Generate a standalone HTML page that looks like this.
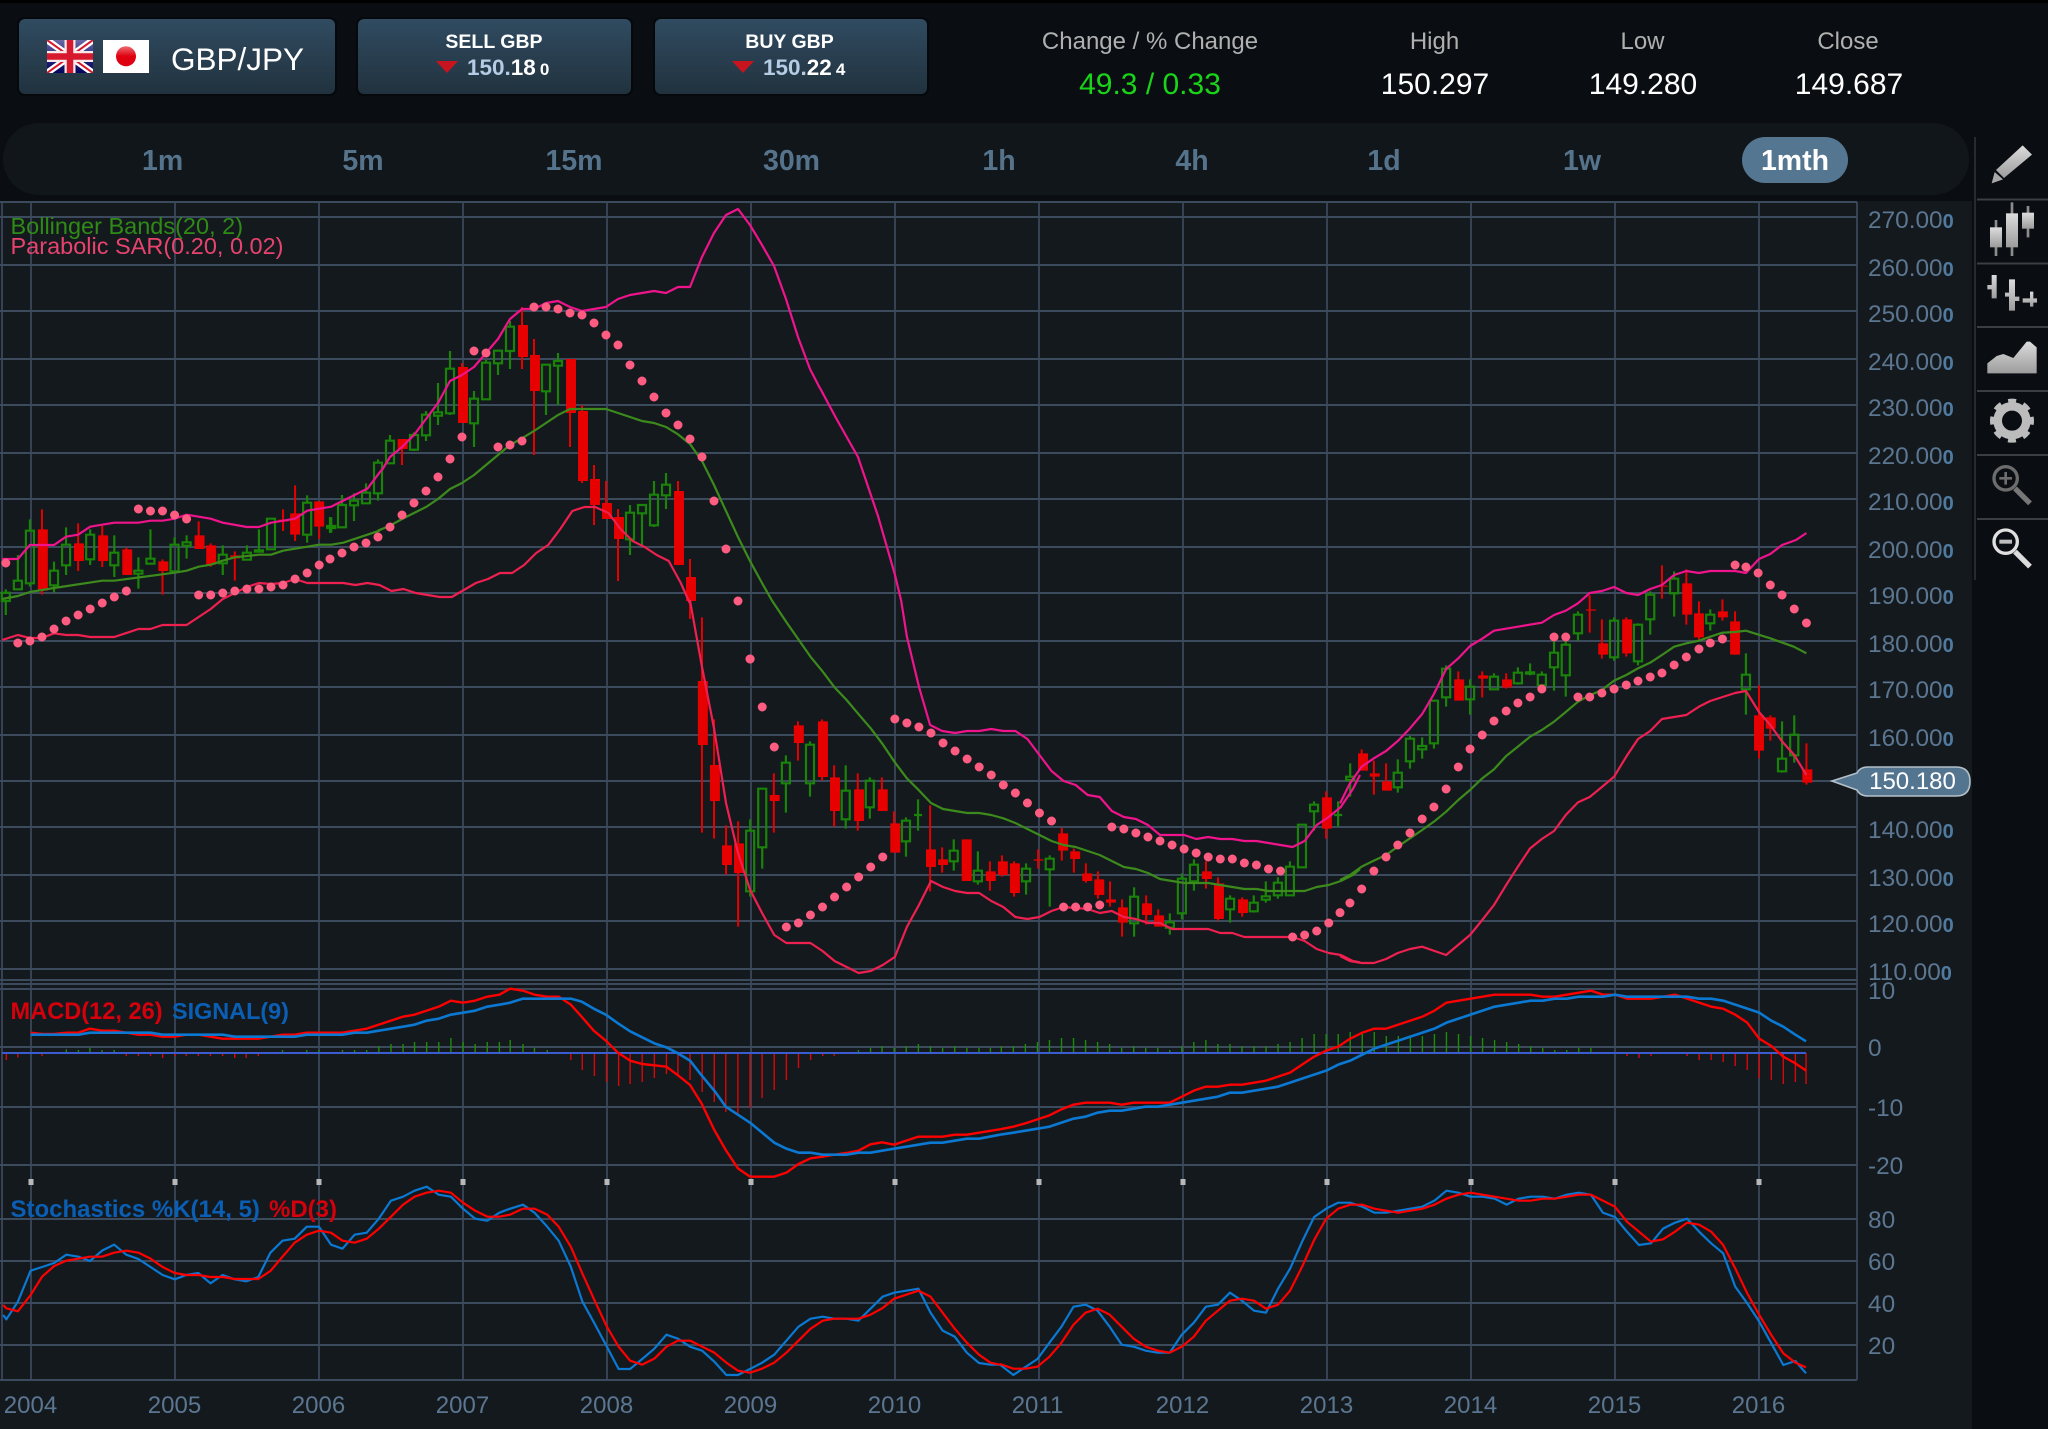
<!DOCTYPE html>
<html lang="en"><head><meta charset="utf-8"><title>GBP/JPY</title>
<style>
html,body{margin:0;padding:0;background:#0a0e12;width:2048px;height:1429px;overflow:hidden}
svg{display:block;font-family:"Liberation Sans",sans-serif}
.n path{vector-effect:non-scaling-stroke;fill:none}
.wr path{stroke:#e60000;stroke-width:2}
.br path{stroke:#e60000;stroke-width:10}
.g path{stroke:#198408;stroke-width:2.2}
.up path{stroke:#f0148c;stroke-width:2.2;stroke-linejoin:round}
.mid path{stroke:#3c8a1c;stroke-width:2.2;stroke-linejoin:round}
.lo path{stroke:#ee2050;stroke-width:2.2;stroke-linejoin:round}
.dot path{stroke:#ff5c82;stroke-width:9;stroke-linecap:round}
.tf{font-size:28.5px;font-weight:700;fill:#56738c;text-anchor:middle}
.hd{font-size:24px;fill:#b0b0b0;text-anchor:middle}
.val{font-size:30px;fill:#fff;text-anchor:middle}
.ax{font-size:24.4px;fill:#5b7690}
.ax tspan{font-size:20px;font-weight:700;fill:#4f7ba0}
.xl{font-size:24px;fill:#5b7690;text-anchor:middle}
.px{font-size:22.5px;font-weight:700;fill:#b4cde4}
</style></head><body>
<svg width="2048" height="1429" viewBox="0 0 2048 1429" xmlns="http://www.w3.org/2000/svg">
<defs>
<linearGradient id="btn" x1="0" y1="0" x2="0" y2="1"><stop offset="0" stop-color="#304b61"/><stop offset="1" stop-color="#21323e"/></linearGradient>
<linearGradient id="ic" x1="0" y1="0" x2="0" y2="1"><stop offset="0" stop-color="#dcdcdc"/><stop offset="1" stop-color="#9c9c9c"/></linearGradient>
<linearGradient id="uk" x1="0" y1="0" x2="0" y2="1"><stop offset="0" stop-color="#6a6aa6"/><stop offset=".5" stop-color="#2a2a80"/><stop offset="1" stop-color="#05055f"/></linearGradient>
<linearGradient id="jp" x1="0" y1="0" x2="0" y2="1"><stop offset="0" stop-color="#ee6a72"/><stop offset=".5" stop-color="#e0000f"/><stop offset="1" stop-color="#dd0010"/></linearGradient>
</defs>
<rect width="2048" height="1429" fill="#0a0e12"/>
<rect width="2048" height="3" fill="#000"/>

<!-- top buttons -->
<rect x="17" y="17" width="320" height="79" rx="7" fill="#05090c"/>
<rect x="19" y="19" width="316" height="75" rx="6" fill="url(#btn)"/>
<rect x="356" y="17" width="277" height="79" rx="7" fill="#05090c"/>
<rect x="358" y="19" width="273" height="75" rx="6" fill="url(#btn)"/>
<rect x="653" y="17" width="276" height="79" rx="7" fill="#05090c"/>
<rect x="655" y="19" width="272" height="75" rx="6" fill="url(#btn)"/>
<!-- UK flag -->
<svg x="47" y="40" width="46" height="33" viewBox="0 0 46 33">
<rect width="46" height="33" fill="url(#uk)"/>
<path d="M0 0L46 33M46 0L0 33" stroke="#fff" stroke-width="6.5"/>
<path d="M0 0L46 33M46 0L0 33" stroke="#d8182c" stroke-width="2"/>
<path d="M23 0V33M0 16.5H46" stroke="#f4e8e8" stroke-width="11"/>
<path d="M23 0V33M0 16.5H46" stroke="#d8182c" stroke-width="6.5"/>
</svg>
<rect x="103" y="40" width="46" height="33" fill="#fff"/>
<circle cx="126" cy="56.3" r="10" fill="url(#jp)"/>
<text x="171" y="70" font-size="31.5" fill="#fff">GBP/JPY</text>
<text x="494" y="48" font-size="19.5" font-weight="700" fill="#fff" text-anchor="middle">SELL GBP</text>
<path d="M436 61H458L447 73Z" fill="#c8141e"/>
<text class="px" x="467" y="75">150.<tspan fill="#fff">18</tspan><tspan font-size="17" fill="#fff" dx="4">0</tspan></text>
<text x="789.5" y="48" font-size="19.5" font-weight="700" fill="#fff" text-anchor="middle">BUY GBP</text>
<path d="M732 61H754L743 73Z" fill="#c8141e"/>
<text class="px" x="763" y="75">150.<tspan fill="#fff">22</tspan><tspan font-size="17" fill="#fff" dx="4">4</tspan></text>
<!-- stats -->
<text class="hd" x="1150" y="49">Change / % Change</text>
<text class="hd" x="1434.5" y="49">High</text>
<text class="hd" x="1642.5" y="49">Low</text>
<text class="hd" x="1848" y="49">Close</text>
<text class="val" x="1150" y="94" style="fill:#19d419">49.3 / 0.33</text>
<text class="val" x="1435" y="94">150.297</text>
<text class="val" x="1643" y="94">149.280</text>
<text class="val" x="1849" y="94">149.687</text>

<!-- timeframe pill -->
<rect x="3" y="123" width="1966" height="72" rx="36" fill="#11161b"/>
<text class="tf" x="162.6" y="170">1m</text>
<text class="tf" x="363" y="170">5m</text>
<text class="tf" x="574" y="170">15m</text>
<text class="tf" x="791.5" y="170">30m</text>
<text class="tf" x="999" y="170">1h</text>
<text class="tf" x="1192" y="170">4h</text>
<text class="tf" x="1384" y="170">1d</text>
<text class="tf" x="1582" y="170">1w</text>
<rect x="1742" y="137" width="106" height="46" rx="23" fill="#557690"/>
<text class="tf" x="1795" y="170" style="fill:#fff">1mth</text>

<!-- chart bg -->
<rect x="0" y="201" width="1972" height="1228" fill="#14191e"/>

<!-- grid -->
<path fill="none" stroke="#3c4a5e" stroke-width="1.7" d="M31 202V1380M175 202V1380M319 202V1380M463 202V1380M607 202V1380M751 202V1380M895 202V1380M1039 202V1380M1183 202V1380M1327 202V1380M1471 202V1380M1615 202V1380M1759 202V1380M2 202V1380M1857 202V1380"/>
<path fill="none" stroke="#3c4a5e" stroke-width="2" d="M0 202H1857M0 217H1857M0 265H1857M0 311H1857M0 359H1857M0 405H1857M0 453H1857M0 499H1857M0 547H1857M0 593H1857M0 641H1857M0 687H1857M0 735H1857M0 781H1857M0 827H1857M0 875H1857M0 921H1857M0 969H1857M0 980H1857M0 984H1857M0 989H1857M0 1047H1857M0 1107H1857M0 1165H1857M0 1219H1857M0 1261H1857M0 1303H1857M0 1345H1857M0 1380H1857"/>

<!-- markers -->
<path stroke="#b8b8b8" stroke-width="5" fill="none" d="M31 1179V1185M175 1179V1185M319 1179V1185M463 1179V1185M607 1179V1185M751 1179V1185M895 1179V1185M1039 1179V1185M1183 1179V1185M1327 1179V1185M1471 1179V1185M1615 1179V1185M1759 1179V1185"/>

<!-- ===== Z4 group ===== -->
<g class="n" transform="matrix(.44643 0 0 .33333 0 470)">
<g class="wr"><path d="M94 118V374M175 160V303M229 168V291M283 233V315M364 268V374M445 154V237M472 220V290M526 244V332M634 118V183M661 46V213M715 94V207"/></g>
<g class="br"><path d="M96 178V362M177 220V273M231 196V273M285 238V315M366 274V303M447 196V237M473 226V284M527 256V265M635 149V155M661 130V194M715 94V170"/></g>
<g class="g"><path d="M13 358V368M13 393V435M4 368H22V393H4ZM40 255V332M40 358V360M31 332H49V358H31ZM67 148V182M67 340V350M58 182H76V340H58ZM121 275V302M121 346V368M112 302H130V346H112ZM148 172V224M148 286V315M139 224H157V286H139ZM202 178V194M202 268V285M193 194H211V268H193ZM256 196V248M256 286V321M247 248H265V286H247ZM310 262V302M310 311V356M301 302H319V311H301ZM337 178V266M337 281V284M328 266H346V281H328ZM391 202V224M391 304V310M382 224H400V304H382ZM418 196V217M418 227V266M409 217H427V227H409ZM499 226V254M499 280V315M490 254H508V280H490ZM553 226V248M553 269V272M544 248H562V269H544ZM580 178V241M580 245V248M571 241H589V245H571ZM598 146H616V238H598ZM607 238V241M688 76V98M688 194V218M679 98H697V194H679ZM742 142V168M742 174V188M733 168H751V174H733Z"/></g>
</g>
<!-- ===== Z9 group ===== -->
<g class="n" transform="matrix(.33333 0 0 .33333 320 195)">
<g class="wr"><path d="M246 732V810M426 504V684M606 336V522M642 432V780M750 492V756M786 630V864M822 810V990M858 858V972M894 942V1158M1074 858V1110M1110 1092V1272"/></g>
<g class="br"><path d="M248 732V762M429 516V684M609 390V486M645 480V588M753 492V654M789 648V858M825 852V930M861 924V972M897 966V1032M1077 888V1110M1113 1146V1218"/></g>
<g class="g"><path d="M30 966V1014M18 996H42M66 900V930M66 997V1000M54 930H78V997H54ZM102 895V917M102 931V978M90 917H114V931H90ZM138 865V893M126 893H150V925H126ZM174 793V803M174 895V917M162 803H186V895H162ZM210 720V737M210 805V808M198 737H222V805H198ZM282 712V720M282 764V768M270 720H294V764H270ZM318 648V659M318 721V738M306 659H330V721H306ZM354 564V652M354 662V690M342 652H366V662H342ZM390 468V521M390 655V660M378 521H402V655H378ZM462 588V611M462 685V756M450 611H474V685H450ZM498 495V503M498 613V615M486 503H510V613H486ZM534 465V467M534 505V540M522 467H546V505H522ZM570 378V395M570 468V522M558 395H582V468H558ZM678 589V660M666 509H690V589H666ZM714 474V498M714 512V630M702 498H726V512H702ZM930 930V953M930 1033V1080M918 953H942V1033H918ZM966 955V1056M954 930H978V955H954ZM1002 858V899M1002 991V996M990 899H1014V991H990ZM1038 834V869M1038 901V942M1026 869H1050V901H1026Z"/></g>
</g>
<!-- ===== Z5 group ===== -->
<g class="n" transform="matrix(.44643 0 0 .33333 660 600)">
<g class="wr"><path d="M94 52V698M121 358V716M148 676V824M175 664V980M255 520V698M309 364V482M363 358V542M390 496V680M443 520V692M497 532V633M524 634V758M605 616V874M632 742V818M686 718V843M739 784V872M766 766V830M793 784V890M847 748V806M900 684V782M927 746V818M954 790V848M981 814V896M1008 844V920M1035 898V1010M1089 886V974M1116 928V980M1223 784V866M1250 832V962M1304 892V950M1492 574V716"/></g>
<g class="br"><path d="M96 243V435M123 495V603M150 736V795M177 730V819M257 585V603M311 376V429M365 364V531M392 532V633M446 568V663M499 568V633M527 670V758M607 748V801M634 778V795M687 718V843M741 814V843M768 784V825M795 790V879M848 778V782M903 700V752M930 754V777M957 820V843M984 838V885M1010 898V908M1037 922V968M1091 910V945M1118 946V980M1225 814V837M1252 850V957M1306 898V939M1494 592V686"/></g>
<g class="g"><path d="M202 658V692M202 874V890M193 692H211V874H193ZM229 742V806M220 566H238V742H220ZM282 466V488M282 550V638M273 488H291V550H273ZM336 424V434M336 550V590M327 434H345V550H327ZM416 496V572M416 658V686M407 572H425V658H407ZM470 532V542M470 622V656M461 542H479V622H461ZM551 652V662M551 724V770M542 662H560V724H542ZM578 598V692M569 645H587M658 718V752M658 784V812M649 752H667V784H649ZM712 754V812M712 844V854M703 812H721V844H703ZM820 790V806M820 844V884M811 806H829V844H811ZM873 766V776M873 808V920M864 776H882V808H864ZM1062 862V890M1062 970V1010M1053 890H1071V970H1053ZM1142 940V967M1142 983V1004M1133 967H1151V983H1133ZM1169 820V836M1169 940V958M1160 836H1178V940H1160ZM1196 778V794M1196 844V872M1187 794H1205V844H1187ZM1277 886V896M1277 928V968M1268 896H1286V928H1268ZM1330 886V908M1330 934V938M1321 908H1339V934H1321ZM1357 844V889M1357 899V908M1348 889H1366V899H1348ZM1384 832V848M1384 886V896M1375 848H1393V886H1375ZM1411 784V800M1402 800H1420V886H1402ZM1429 674H1447V802H1429ZM1465 604V614M1465 634V692M1456 614H1474V634H1456ZM1519 604V680M1510 645H1528M1546 490V530M1546 540V590M1537 530H1555V540H1537Z"/></g>
</g>
<!-- ===== Z6 group ===== -->
<g class="n" transform="matrix(.45153 0 0 .33333 1340 540)">
<g class="wr"><path d="M48 628V692M75 662V764M102 670V752M262 394V482M315 394V472M368 400V446M553 166V278M580 238V356M634 232V350M713 76V176M767 88V254M795 184V298M847 178V242M875 214V344M928 436V656M953 526V602M1033 610V734"/></g>
<g class="br"><path d="M51 640V692M77 700V710M104 724V752M264 418V482M317 406V416M370 418V442M556 208V212M583 310V344M636 238V340M715 137V140M769 130V224M795 220V292M848 214V232M875 244V344M928 526V632M954 532V566M1035 688V728"/></g>
<g class="g"><path d="M128 658V698M128 742V758M119 698H137V742H119ZM155 588V596M155 664V686M146 596H164V664H146ZM182 592V618M182 628V656M173 618H191V628H173ZM208 610V626M199 482H217V610H199ZM235 376V386M235 472V500M226 386H244V472H226ZM288 418V440M288 478V524M279 440H297V478H279ZM341 400V410M332 410H350V448H332ZM394 382V398M394 430V434M385 398H403V430H385ZM421 370V397M421 401V406M412 397H430V401H412ZM447 394V404M447 436V440M438 404H456V436H438ZM474 304V338M474 382V452M465 338H483V382H465ZM500 282V314M500 406V470M491 314H509V406H491ZM527 214V224M527 280V302M518 224H536V280H518ZM607 232V242M607 352V362M598 242H616V352H598ZM660 250V254M660 364V376M651 254H669V364H651ZM687 154V164M687 238V284M678 164H696V238H678ZM740 94V116M740 160V230M731 116H749V160H731ZM820 208V224M820 250V272M811 224H829V250H811ZM899 340V404M899 448V524M890 404H908V448H890ZM979 544V656M979 694V698M970 656H988V694H970ZM1006 526V584M1006 646V668M997 584H1015V646H997Z"/></g>
</g>

<!-- ===== Bands ===== -->
<g class="n up">
<g transform="matrix(.44643 0 0 .33333 0 470)"><path d="M5 267L40 267 67 225 121 225 148 200 175 194 202 170 256 158 310 158 337 152 364 152 391 146 418 134 472 146 499 158 553 171 580 171 607 158 634 152 661 146 688 122 742 110 769 92 823 56 850 8 855 0"/></g>
<g transform="matrix(.33333 0 0 .33333 320 195)"><path d="M186 825L210 786 246 756 282 720 318 672 354 624 390 558 426 540 462 516 498 474 534 432 570 372 606 342 642 342 678 324 714 318 750 336 786 348 822 342 858 336 894 312 930 300 966 294 1002 288 1038 294 1074 276 1110 276 1146 186 1182 114 1218 60 1254 42 1290 90 1326 150 1362 213 1398 312 1434 426 1470 522 1500 580"/></g>
<path d="M820 388L836 418 858 457 878 516 895 575 901 600"/>
<g transform="matrix(.44643 0 0 .33333 660 600)"><path d="M540 0L553 110 580 260 605 375 632 393 661 399 688 393 715 393 742 387 769 393 796 393 823 417 850 465 877 513 904 543 931 555 958 585 985 591 1012 633 1039 651 1066 657 1093 675 1120 705 1174 705 1201 717 1228 711 1255 717 1282 717 1309 723 1336 723 1363 729 1390 735 1417 741 1444 723 1471 675 1498 651 1525 621 1552 567 1568 525"/></g>
<g transform="matrix(.45153 0 0 .33333 1340 540)"><path d="M0 790L22 730 48 680 75 655 102 633 128 603 155 565 182 522 208 462 235 387 262 355 288 318 315 296 341 272 394 260 447 248 474 225 500 212 527 190 553 159 580 153 607 141 634 159 660 165 687 147 713 135 740 105 767 93 795 99 820 93 875 93 899 99 928 57 953 42 979 15 1010 0 1033 -21"/></g>
</g>
<g class="n mid">
<g transform="matrix(.44643 0 0 .33333 0 470)"><path d="M5 387L40 378 67 366 121 354 229 332 256 332 391 308 418 302 445 290 472 284 499 272 526 262 580 254 607 254 634 242 715 224 742 224 769 218 850 182"/></g>
<g transform="matrix(.33333 0 0 .33333 320 195)"><path d="M174 1007L210 992 246 972 282 954 318 936 354 912 390 882 426 864 462 840 498 810 534 780 570 750 606 730 642 708 678 684 714 660 750 642 858 642 894 654 930 666 966 678 1002 684 1038 696 1074 718 1110 747 1146 798 1182 870 1218 948 1254 1026 1290 1098 1326 1164 1355 1215"/></g>
<g transform="matrix(.44643 0 0 .33333 660 600)"><path d="M250 0L285 70 337 170 364 214 391 262 418 300 445 343 472 385 499 433 526 487 553 535 580 571 607 609 634 627 661 633 688 639 715 639 742 645 769 655 796 669 823 687 850 705 877 723 904 735 931 741 958 753 985 765 1012 783 1039 801 1066 807 1093 819 1120 837 1147 843 1174 849 1228 849 1255 855 1282 861 1309 867 1336 867 1363 873 1390 873 1417 873 1444 873 1471 861 1498 855 1525 843 1552 825 1568 807"/></g>
<g transform="matrix(.45153 0 0 .33333 1340 540)"><path d="M0 1020L22 1005 48 980 75 962 102 945 128 920 155 895 182 870 208 845 235 815 262 780 288 750 315 715 341 688 368 648 394 620 421 590 447 570 474 545 500 516 527 485 553 466 580 450 607 422 634 405 660 385 687 368 713 345 740 320 767 310 795 302 820 290 847 278 875 276 899 272 953 295 1005 320 1033 340"/></g>
</g>
<g class="n lo">
<g transform="matrix(.44643 0 0 .33333 0 470)"><path d="M5 510L40 495 67 504 94 504 121 490 148 495 175 495 202 501 256 501 310 477 337 477 364 465 418 465 472 417 499 387 526 369 553 351 580 339 607 342 634 339 661 327 688 339 769 339 796 345 823 339 850 345 877 363 904 357 931 369 985 381 1012 381 1066 339 1093 327 1120 309 1147 309 1174 285 1201 249 1228 225 1255 177 1282 123 1309 111 1333 111 1363 129 1390 177 1417 213 1444 231 1471 255 1498 273 1525 339 1545 399"/></g>
<g transform="matrix(.44643 0 0 .33333 660 600)"><path d="M67 0L94 200 121 385 148 610 175 760 202 870 229 940 256 1005 283 1029 337 1029 364 1053 391 1083 445 1119 472 1113 499 1095 526 1071 553 981 580 915 607 843 634 861 661 873 688 879 715 879 742 903 769 921 796 951 823 957 850 951 877 933 904 921 958 927 985 939 1012 933 1039 951 1066 957 1093 969 1120 969 1147 987 1228 987 1255 999 1282 999 1309 1011 1417 1011 1444 1023 1471 1047 1498 1059 1525 1065 1552 1083 1568 1087"/></g>
<g transform="matrix(.45153 0 0 .33333 1340 540)"><path d="M0 1248L22 1263 48 1269 75 1269 102 1257 128 1239 155 1227 182 1220 235 1245 288 1185 315 1140 341 1095 368 1035 394 980 421 925 447 897 474 873 500 825 527 787 553 771 580 741 607 710 634 650 660 597 687 573 713 537 767 525 795 500 820 483 875 459 899 453 928 516 953 555 979 604 1006 645 1033 705"/></g>
</g>

<!-- ===== SAR dots ===== -->
<g class="n dot">
<g transform="matrix(.44643 0 0 .33333 0 470)"><path d="M13 279h.01M40 519h.01M67 513h.01M94 501h.01M121 477h.01M148 453h.01M175 435h.01M202 417h.01M229 399h.01M256 381h.01M283 363h.01M310 117h.01M337 123h.01M364 123h.01M391 135h.01M418 147h.01M445 375h.01M472 375h.01M499 369h.01M526 363h.01M553 357h.01M580 357h.01M607 351h.01M634 345h.01M661 327h.01M688 309h.01M715 285h.01"/></g>
<g transform="matrix(.33333 0 0 .33333 320 195)"><path d="M30 1092h.01M66 1074h.01M102 1056h.01M138 1044h.01M174 1026h.01M210 996h.01M246 960h.01M282 924h.01M318 888h.01M354 846h.01M390 792h.01M426 726h.01M462 468h.01M498 474h.01M534 756h.01M570 750h.01M606 738h.01M642 336h.01M678 336h.01M714 342h.01M750 354h.01M786 360h.01M822 384h.01M858 420h.01M894 450h.01M930 510h.01M966 558h.01M1002 606h.01M1038 654h.01M1074 690h.01M1110 732h.01M1146 786h.01M1182 918h.01M1218 1062h.01M1254 1218h.01M1290 1392h.01"/></g>
<g transform="matrix(.44643 0 0 .33333 660 600)"><path d="M202 177h.01M229 321h.01M256 441h.01M283 981h.01M310 969h.01M337 945h.01M364 921h.01M391 891h.01M418 861h.01M445 831h.01M472 801h.01M499 771h.01M526 357h.01M553 369h.01M580 381h.01M607 399h.01M634 429h.01M661 453h.01M688 477h.01M715 501h.01M742 525h.01M769 555h.01M796 579h.01M823 609h.01M850 639h.01M877 663h.01M904 921h.01M931 921h.01M958 921h.01M985 915h.01M1012 681h.01M1039 687h.01M1066 699h.01M1093 711h.01M1120 723h.01M1147 735h.01M1174 747h.01M1201 759h.01M1228 771h.01M1255 777h.01M1282 777h.01M1309 789h.01M1336 795h.01M1363 807h.01M1390 813h.01M1417 1011h.01M1444 1005h.01M1471 993h.01M1498 969h.01"/></g>
<g transform="matrix(.45153 0 0 .33333 1340 540)"><path d="M0 1118h.01M22 1089h.01M48 1047h.01M75 993h.01M102 951h.01M128 915h.01M155 879h.01M182 837h.01M208 801h.01M235 747h.01M262 681h.01M288 627h.01M315 585h.01M341 543h.01M368 513h.01M394 489h.01M421 471h.01M447 447h.01M474 291h.01M500 291h.01M527 471h.01M553 471h.01M580 459h.01M607 447h.01M634 435h.01M660 423h.01M687 411h.01M713 399h.01M740 375h.01M767 351h.01M795 327h.01M820 309h.01M847 297h.01M875 75h.01M899 81h.01M926 99h.01M953 135h.01M979 165h.01M1006 207h.01M1033 249h.01"/></g>
</g>

<!-- ===== MACD histogram ===== -->
<g class="n">
<g transform="matrix(.63776 0 0 .33333 0 960)">
<path stroke="#d80808" stroke-width="1.4" d="M10 279V300M28 279V293M66 279V288M198 279V288M217 279V288M236 279V288M255 279V294M274 279V288M292 279V288M311 279V288M330 279V288M349 279V288M368 279V294M386 279V294M405 279V288M895 279V300M913 279V330M932 279V348M951 279V366M970 279V378M988 279V372M1007 279V366M1026 279V354M1045 279V342M1063 279V348M1082 279V360M1101 279V396M1120 279V426M1138 279V456M1157 279V462M1176 279V444M1195 279V414M1214 279V390M1233 279V360M1252 279V324M1271 279V300M1290 279V288M1308 279V288"/>
<path stroke="#1d8c08" stroke-width="1.4" d="M104 279V268M123 279V270M141 279V264M160 279V270M179 279V270M443 279V270M481 279V270M500 279V270M537 279V270M556 279V270M575 279V270M594 279V258M613 279V252M632 279V252M650 279V246M669 279V246M688 279V246M707 279V234M726 279V246M745 279V252M764 279V246M783 279V246M800 279V240M820 279V252M838 279V264M858 279V270M1346 279V270M1365 279V264M1383 279V258M1402 279V264M1421 279V258M1440 279V252M1459 279V258M1478 279V264M1497 279V258M1516 279V264M1535 279V264M1553 279V264"/>
</g>
<g transform="matrix(.66837 0 0 .33333 1000 960)">
<path stroke="#1d8c08" stroke-width="1.4" d="M2 279V258M20 279V258M38 279V252M56 279V246M74 279V240M92 279V234M110 279V234M128 279V240M146 279V246M164 279V252M182 279V264M200 279V258M218 279V264M236 279V264M254 279V270M272 279V258M290 279V246M308 279V240M326 279V252M344 279V252M362 279V258M380 279V258M398 279V258M416 279V252M434 279V246M452 279V234M470 279V222M488 279V222M506 279V222M524 279V216M542 279V216M560 279V216M578 279V228M596 279V228M614 279V234M632 279V228M650 279V222M668 279V216M686 279V222M704 279V228M722 279V234M740 279V240M758 279V246M776 279V252M794 279V258M812 279V264M830 279V270M848 279V270M866 279V264M884 279V264"/>
<path stroke="#d80808" stroke-width="1.4" d="M938 279V288M956 279V294M974 279V288M1028 279V288M1046 279V300M1064 279V300M1082 279V306M1100 279V318M1118 279V330M1136 279V354M1154 279V360M1172 279V372M1190 279V366M1206 279V372"/>
</g>
</g>
<path d="M2 1053H1806" stroke="#3a5ccf" stroke-width="2" fill="none"/>

<!-- ===== MACD / Stoch lines ===== -->
<g class="n">
<g transform="matrix(.63776 0 0 .33333 0 960)">
<path stroke="#ff0000" stroke-width="2.4" stroke-linejoin="round" d="M48 218L66 222 85 222 104 218 123 218 141 206 160 212 179 212 198 218 217 224 236 224 255 230 274 230 292 224 311 224 330 230 349 236 405 236 424 230 443 224 462 224 481 218 537 218 556 212 575 206 594 194 613 182 632 170 650 164 669 152 688 140 707 122 726 128 745 122 764 110 783 104 800 86 820 92 838 104 858 110 876 110 895 134 912 170 931 212 950 242 969 278 988 302 1007 312 1026 316 1045 320 1063 346 1082 375 1100 430 1120 510 1138 570 1157 625 1176 650 1214 650 1233 638 1252 612 1271 595 1290 590 1308 584 1327 579 1346 572 1365 553 1383 547 1402 554 1421 542 1440 530 1478 530 1497 524 1516 524 1535 518 1568 508"/>
<path stroke="#0b78d2" stroke-width="2.6" stroke-linejoin="round" d="M48 224L123 224 141 218 236 218 255 224 349 224 368 230 462 230 481 224 537 224 556 218 575 218 594 212 613 206 632 200 650 194 669 182 688 176 707 164 726 158 745 152 764 140 783 134 800 128 820 116 895 116 912 125 931 146 950 164 969 190 988 214 1007 232 1026 250 1045 262 1063 280 1082 302 1100 346 1120 392 1138 440 1157 464 1176 488 1195 518 1214 548 1233 566 1252 578 1271 578 1290 584 1327 584 1346 578 1365 578 1383 572 1402 566 1421 560 1440 554 1459 548 1478 548 1497 542 1516 536 1535 536 1568 524"/>
<path stroke="#0b78d2" stroke-width="2.2" stroke-linejoin="round" d="M5 1065L10 1078 28 1025 48 932 66 921 85 909 104 884 123 890 141 903 160 872 179 854 198 884 217 897 236 921 255 945 274 958 292 945 311 939 330 970 349 945 368 958 386 964 405 951 424 878 443 842 462 836 481 800 500 800 519 854 537 866 556 824 575 818 594 776 613 722 632 710 650 692 669 680 688 704 707 710 726 746 745 776 764 782 783 758 800 746 820 734 838 758 858 800 876 842 895 920 913 1024 932 1090 951 1158 970 1227 988 1227 1007 1197 1026 1166 1045 1124 1063 1136 1082 1160 1101 1172 1120 1205 1139 1245 1157 1245 1176 1227 1195 1208 1214 1184 1233 1142 1252 1100 1271 1076 1290 1070 1308 1076 1327 1076 1346 1082 1365 1046 1384 1010 1402 998 1421 992 1440 986 1459 1058 1478 1112 1497 1130 1516 1178 1535 1209 1553 1214 1568 1214"/>
<path stroke="#ff0000" stroke-width="2.2" stroke-linejoin="round" d="M5 1035L10 1045 28 1054 48 1005 66 950 85 918 104 902 123 896 141 890 160 890 179 878 198 872 217 878 236 896 255 921 274 939 292 945 311 945 330 951 349 951 368 957 405 957 424 933 443 890 462 848 481 824 500 812 519 818 537 842 556 848 575 836 594 806 613 770 632 734 650 710 669 698 688 692 707 698 726 728 745 752 764 770 783 770 800 764 820 746 838 746 858 764 876 800 895 860 913 940 932 1020 951 1098 970 1160 988 1202 1007 1214 1026 1196 1045 1160 1063 1142 1082 1142 1101 1160 1120 1178 1139 1208 1157 1232 1176 1238 1195 1226 1214 1208 1233 1178 1252 1142 1271 1106 1290 1082 1308 1076 1346 1076 1365 1064 1384 1044 1402 1016 1421 1004 1440 992 1459 1010 1478 1058 1497 1106 1516 1148 1535 1184 1553 1208 1568 1214"/>
</g>
<g transform="matrix(.66837 0 0 .33333 1000 960)">
<path stroke="#ff0000" stroke-width="2.4" stroke-linejoin="round" d="M0 508L20 500 38 490 56 478 74 466 92 448 110 434 128 428 164 428 182 434 200 428 254 428 272 410 290 392 308 380 326 380 344 374 362 374 380 368 398 362 416 350 434 338 452 314 470 290 488 272 506 260 524 236 542 218 560 206 578 206 596 194 614 182 632 170 650 152 668 128 686 122 704 116 722 110 740 104 794 104 812 110 830 110 848 104 866 98 884 92 902 104 920 104 938 116 974 116 992 110 1010 104 1028 116 1046 128 1064 140 1082 146 1100 164 1118 188 1136 236 1154 258 1172 290 1190 310 1206 332"/>
<path stroke="#0b78d2" stroke-width="2.6" stroke-linejoin="round" d="M0 524L20 518 38 512 56 506 74 500 92 488 110 476 128 470 146 458 164 452 182 452 200 446 218 440 236 440 254 434 272 428 290 422 308 416 326 410 344 398 362 398 380 392 398 386 416 380 434 368 452 356 470 344 488 332 506 314 524 302 542 284 560 266 578 254 596 242 614 230 632 218 650 206 668 188 686 176 704 164 722 152 740 140 758 134 776 128 794 122 812 122 830 116 848 116 866 110 902 110 920 104 938 110 1028 110 1046 116 1064 116 1082 122 1100 134 1118 146 1136 158 1154 182 1172 200 1190 224 1206 244"/>
<path stroke="#0b78d2" stroke-width="2.2" stroke-linejoin="round" d="M0 1214L20 1245 38 1221 56 1197 74 1148 92 1100 110 1040 128 1034 146 1052 164 1100 182 1154 200 1160 218 1172 236 1178 254 1178 272 1124 290 1088 308 1040 326 1034 344 998 362 1022 380 1052 398 1058 416 986 434 926 452 845 470 771 488 746 506 728 524 728 542 740 560 758 578 758 596 752 614 746 632 740 650 722 668 692 686 698 704 710 722 710 740 716 758 734 776 716 794 710 812 710 830 716 848 704 866 698 884 704 902 758 920 771 938 815 956 855 974 850 992 806 1010 788 1028 776 1046 815 1064 850 1082 880 1100 980 1118 1030 1136 1085 1154 1150 1172 1215 1190 1203 1206 1240"/>
<path stroke="#ff0000" stroke-width="2.2" stroke-linejoin="round" d="M0 1212L20 1226 38 1226 56 1220 74 1190 92 1148 110 1094 128 1058 146 1046 164 1064 182 1100 200 1136 218 1160 236 1172 254 1178 272 1160 290 1130 308 1082 326 1052 344 1022 362 1016 380 1022 398 1046 416 1034 434 992 452 920 470 840 488 776 506 746 524 734 542 734 560 746 578 752 596 758 614 752 632 746 650 734 668 716 686 704 704 698 722 704 740 710 758 716 776 722 794 722 812 716 830 716 848 710 866 704 884 704 902 722 920 740 938 785 956 815 974 845 992 838 1010 815 1028 788 1046 794 1064 815 1082 855 1100 925 1118 1000 1136 1065 1154 1125 1172 1180 1190 1208 1206 1222"/>
</g>
</g>

<!-- legends -->
<text x="10.5" y="234" font-size="23.5" fill="#2f8a16">Bollinger Bands(20, 2)</text>
<text x="10.5" y="254" font-size="23.5" fill="#e8436e">Parabolic SAR(0.20, 0.02)</text>
<text x="10.5" y="1019" font-size="23.6" font-weight="700" fill="#d4000c">MACD(12, 26)</text>
<text x="172" y="1019" font-size="23.4" font-weight="700" fill="#0a5fb4">SIGNAL(9)</text>
<text x="10.5" y="1217" font-size="24" font-weight="700" fill="#0a5fb4">Stochastics %K(14, 5)</text>
<text x="269" y="1217" font-size="24" font-weight="700" fill="#d4000c">%D(3)</text>

<!-- y axis -->
<g transform="translate(0 1)">
<text class="ax" x="1868" y="227">270.00<tspan>0</tspan></text>
<text class="ax" x="1868" y="275">260.00<tspan>0</tspan></text>
<text class="ax" x="1868" y="321">250.00<tspan>0</tspan></text>
<text class="ax" x="1868" y="369">240.00<tspan>0</tspan></text>
<text class="ax" x="1868" y="415">230.00<tspan>0</tspan></text>
<text class="ax" x="1868" y="463">220.00<tspan>0</tspan></text>
<text class="ax" x="1868" y="509">210.00<tspan>0</tspan></text>
<text class="ax" x="1868" y="557">200.00<tspan>0</tspan></text>
<text class="ax" x="1868" y="603">190.00<tspan>0</tspan></text>
<text class="ax" x="1868" y="651">180.00<tspan>0</tspan></text>
<text class="ax" x="1868" y="697">170.00<tspan>0</tspan></text>
<text class="ax" x="1868" y="745">160.00<tspan>0</tspan></text>
<text class="ax" x="1868" y="837">140.00<tspan>0</tspan></text>
<text class="ax" x="1868" y="885">130.00<tspan>0</tspan></text>
<text class="ax" x="1868" y="931">120.00<tspan>0</tspan></text>
<text class="ax" x="1868" y="979">110.00<tspan>0</tspan></text>
</g>
<text class="ax" x="1868" y="999">10</text>
<text class="ax" x="1868" y="1056">0</text>
<text class="ax" x="1868" y="1116">-10</text>
<text class="ax" x="1868" y="1174">-20</text>
<text class="ax" x="1868" y="1228">80</text>
<text class="ax" x="1868" y="1270">60</text>
<text class="ax" x="1868" y="1312">40</text>
<text class="ax" x="1868" y="1354">20</text>

<!-- price tag -->
<path d="M1832 781L1857 773Q1860 767 1868 767H1956Q1970 767 1970 781.5Q1970 796 1956 796H1868Q1860 796 1857 790Z" fill="#547590" stroke="#b4c0c8" stroke-width="1.6"/>
<text x="1912.5" y="789" font-size="24" fill="#fff" text-anchor="middle">150.180</text>

<!-- x axis -->
<text class="xl" x="30.5" y="1413">2004</text>
<text class="xl" x="174.5" y="1413">2005</text>
<text class="xl" x="318.5" y="1413">2006</text>
<text class="xl" x="462.5" y="1413">2007</text>
<text class="xl" x="606.5" y="1413">2008</text>
<text class="xl" x="750.5" y="1413">2009</text>
<text class="xl" x="894.5" y="1413">2010</text>
<text class="xl" x="1037.5" y="1413">2011</text>
<text class="xl" x="1182.5" y="1413">2012</text>
<text class="xl" x="1326.5" y="1413">2013</text>
<text class="xl" x="1470.5" y="1413">2014</text>
<text class="xl" x="1614.5" y="1413">2015</text>
<text class="xl" x="1758.5" y="1413">2016</text>

<!-- right panel -->
<rect x="1972" y="196" width="76" height="1233" fill="#0a0e12"/>
<path d="M1975 137V580" stroke="#2e3338" stroke-width="1.6"/>
<path d="M1977 199.5H2048M1977 263.5H2048M1977 327H2048M1977 391H2048M1977 455H2048M1977 519H2048" stroke="#3a3f44" stroke-width="2"/>
<g transform="translate(1900 120) scale(.33333)">
<path d="M368 76L396 104 312 174 288 150Z" fill="url(#ic)"/>
<path d="M275 190L284 156 309 178Z" fill="#a8a8a8"/>
<path d="M288 300V408M336 247V408M384 258V352" stroke="#8c8c8c" stroke-width="8" fill="none"/>
<rect x="270" y="322" width="36" height="60" fill="url(#ic)"/>
<rect x="318" y="280" width="36" height="102" fill="url(#ic)"/>
<rect x="366" y="278" width="36" height="48" fill="url(#ic)"/>
<path d="M275 465H290V535H275V508H262V495H275Z" fill="url(#ic)"/>
<path d="M327 478H345V518V530H358V543H345V572H327V530H315V518H327Z" fill="url(#ic)"/>
<path d="M390 515H400V535H411V548H400V560H390V548H368V535H390Z" fill="url(#ic)"/>
<path d="M262 760V730L290 708 310 702 340 714 380 665 390 665 410 682V760Z" fill="url(#ic)"/>
<circle cx="336" cy="902" r="43" fill="none" stroke="#bcbcbc" stroke-width="26"/>
<circle cx="336" cy="902" r="60" fill="none" stroke="#bcbcbc" stroke-width="12" stroke-dasharray="24 23.12" stroke-dashoffset="12"/>
<circle cx="317" cy="1075" r="35" fill="none" stroke="#6c6c6c" stroke-width="10"/>
<path d="M298 1075H336M317 1056V1094" stroke="#6c6c6c" stroke-width="8"/>
<path d="M345 1105L390 1150" stroke="#777" stroke-width="16"/>
<circle cx="317" cy="1265" r="35" fill="none" stroke="#e0e0e0" stroke-width="10"/>
<path d="M298 1265H336" stroke="#bdbdbd" stroke-width="12"/>
<path d="M345 1295L390 1340" stroke="#dcdcdc" stroke-width="16"/>
</g>
</svg>
</body></html>
